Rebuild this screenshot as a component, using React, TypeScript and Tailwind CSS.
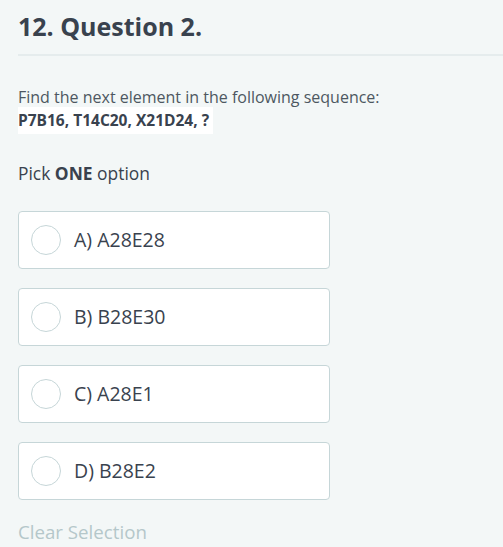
import { useState } from "react";

const OPTIONS = ["A) A28E28", "B) B28E30", "C) A28E1", "D) B28E2"];

export default function App() {
  const [picked, setPicked] = useState<number | null>(null);

  return (
    <div
      className="min-h-screen w-full bg-[#f3f7f7] text-[#39424e]"
      style={{ fontFamily: '"Open Sans", "Liberation Sans", sans-serif' }}
    >
      <div className="pl-[18px] pt-[9px]">
        <h1 className="text-[25px] font-bold leading-[34px] text-[#39424e]">
          12. Question 2.
        </h1>
        <div className="mt-[11px] h-[2px] bg-[#e5eced]" />

        <div className="mt-[30px]">
          <p className="text-[16px] leading-[22px] text-[#4d5761]">
            Find the next element in the following sequence:
          </p>
          <p className="-mt-[1px] inline-block bg-white pr-[4px] text-[15.5px] font-bold leading-[27px] text-[#39424e]">
            P7B16, T14C20, X21D24, ?
          </p>
        </div>

        <p className="mt-[27px] text-[17.4px] leading-[24px]">
          Pick <span className="font-bold">ONE</span> option
        </p>

        <div className="mt-[26px] flex w-[312px] flex-col gap-[19px]">
          {OPTIONS.map((opt, i) => (
            <button
              key={opt}
              onClick={() => setPicked(i)}
              className="flex h-[58px] items-center rounded-[4px] border border-[#c6d6d8] bg-white pl-[12px] text-left"
            >
              <span
                className={`flex h-[30px] w-[30px] items-center justify-center rounded-full border ${
                  picked === i ? "border-[#1ba94c]" : "border-[#c6d6d8]"
                }`}
              >
                {picked === i && (
                  <span className="h-[14px] w-[14px] rounded-full bg-[#1ba94c]" />
                )}
              </span>
              <span className="ml-[13px] text-[19.5px] text-[#39424e]">{opt}</span>
            </button>
          ))}
        </div>

        <button
          onClick={() => setPicked(null)}
          className="mt-[19px] text-[18.7px] leading-[26px] text-[#b5c7ca]"
        >
          Clear Selection
        </button>
      </div>
    </div>
  );
}
